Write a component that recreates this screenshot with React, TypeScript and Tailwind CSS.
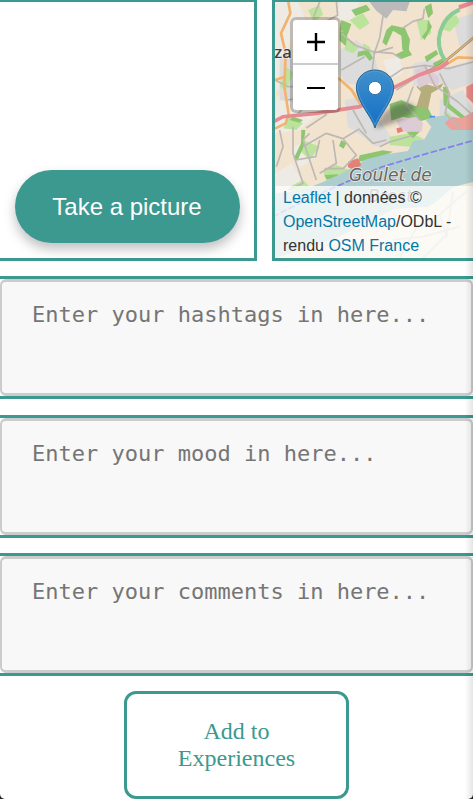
import React from "react";

function MapTiles() {
  return (
    <svg
      viewBox="6 6 594 768"
      preserveAspectRatio="xMinYMin slice"
      className="absolute inset-0 h-full w-full"
      aria-hidden="true"
    >
      <defs>
        <filter id="soft" x="-5%" y="-5%" width="110%" height="110%">
          <feGaussianBlur stdDeviation="2" />
        </filter>
        <filter id="shade" x="-30%" y="-30%" width="160%" height="160%">
          <feGaussianBlur stdDeviation="7" />
        </filter>
        <linearGradient id="pin" x1="0" y1="0" x2="0" y2="1">
          <stop offset="0" stopColor="#4090cc" />
          <stop offset="1" stopColor="#126fc6" />
        </linearGradient>
      </defs>
      <g filter="url(#soft)">
        <rect x="-20" y="-20" width="660" height="820" fill="#f2e3cf" />
        <g fill="#eeeae4">
          <path d="M6 6h70l20 50-50 80 10 100-50 40z" />
          <path d="M200 6h60l-20 50-50 10zM10 290l90-10 40 60-60 50-74 10zM330 180l50-10 10 50-40 20zM60 440l60-20 10 50-60 40z" />
          <path d="M6 520l50-30 30 50-60 50-20-10z" />
        </g>
        <g fill="#dcdcdc">
          <path d="M200 150l50-30 50 40 20 60-40 40-60-10-30-40z" />
          <path d="M420 190l60-10 50 20 70-20v70l-60 20-60-30-60 20z" />
          <path d="M540 60l60-20v80l-40 20z" />
          <path d="M215 300l60-10 40 60 30 50-60 20-60-40z" />
          <path d="M20 170l50 10 30 60-20 70-60-10z" />
          <path d="M500 300l70-30 30 60-40 40-60-20z" />
          <path d="M290 390l50 0 20 30-50 20-30-20z" />
        </g>
        <path d="M290 6h120l-10 28-40-4-20 26-30-24z" fill="#bababa" />
        <g fill="#bce39c">
          <path d="M105 30l35-14 10 28-28 20zM230 60l40-20 20 30-30 20zM220 110l40 30-20 20-25-10z" />
          <path d="M270 130l20 10 10 35-30-10zM510 60l40-15 10 20-30 30-24-8zM430 60l40 0 5 40-30 20z" />
          <path d="M40 200l20 20-20 50-20-10zM50 350l40 20-20 20-40-5z" />
          <path d="M350 410l60-10 40 15-40 25-60-5zM520 330l50 60-30 20-30-40zM90 420l50 20-30 40-25-25z" />
          <path d="M150 510l40-15 40 15-30 25-45-4zM50 560l40-20 20 20-50 25z" />
        </g>
        <g fill="#8dc570">
          <path d="M235 30l45-16 12 16-44 18zM205 60l30 12-10 30-25-12zM200 92l24 8-6 38-18-16z" />
          <path d="M455 20l20-10 5 30-14 15zM465 60l12 20-22 40-8-10 15-20z" />
          <path d="M340 90l16-14 40 8 15 35-5 40-18-10-3-42-25-15-20 45-12-10z" />
          <path d="M365 165l40-20 12 20-32 12zM255 155l30-5 15 25-10 8-15-18-22 6z" />
          <path d="M455 170l35-20 6 12-35 25zM480 190l35-18 8 10-40 22z" />
          <path d="M350 312l35-12 40 18 35-4 20 40-40 10-50-14-35 12z" />
          <path d="M510 260l15 2 5 50 55 45-8 8-65-50zM60 350l30 10-10 8-30-8z" />
          <path d="M85 390l12 0-5 50-18 40-12-4 22-46zM205 420l15 10-8 16-14-8zM155 525l40-2 5 8-40 8z" />
          <path d="M260 466l70-15 30 4-45 20-60 10zM400 395l45-5-25 25z" />
        </g>
        <path d="M430 260l20-10 36 10 25-10-6 12-30 18-10 48-35-8 14-45z" fill="#b5ad7c" />
        <path d="M425 210l30-10 42 30 0 28-28-8-32 15zM370 360l60-10 20 20-5 25-60 0z" fill="#ddcbd5" />
        <path d="M458 360l25-10 42-5 25 45h50v195l-55 13-80 22-100 6-180 90-185 60V580l80-6 70-28 60-28 70-40 60-15 65-10 15-30 35-6 20-36z" fill="#aecdce" />
        <path d="M535 350l30 5 35-20v55h-65l-20-20z" fill="#eaa29b" />
        <path d="M580 260l20-10v60l-20-20z" fill="#e98d8a" />
        <path d="M600 546l-60 15-40 35-50 36-60 30-40 40-70 72h320z" fill="#efe9d4" />
        <path d="M225 485l30-10 10 20-20 15-20-8zM370 385l15-3 5 12-16 6z" fill="#e48176" />
        <g fill="none" stroke="#bdb8b2" strokeWidth="5" strokeLinejoin="round">
          <path d="M332 34l-12 80-16 46-10 80 10 50M205 100l40 35 55 20 60 5 24 16M390 84l30-20 30-8 4-30M300 160l60-18M75 130l40 90-10 90-38 40M205 210l70-40M190 6l4 40-40 20M140 6l-18 44" />
          <path d="M340 240l50-34 65-10 30 60 70 50 45 40M370 270l70-44M455 196l70 10 75-20M500 220l30 60-14 60 50 50M420 260l-20 56 40 44" />
          <path d="M20 390l10 50-20 60M60 380l0 80 30 90-44 20M90 440l70-40 50 16 50-30M140 420l-12 50-60 10M210 416l40 50-40 40-55 0M260 390l40 40 40-10M240 330l40 70M110 400l-20 20 40 120M180 420l10 70-50 30" />
          <path d="M320 440l30-14 70-20M40 300l80-10 40 54-60 40M6 240l40 20 80 0" />
        </g>
        <g fill="none" stroke="#ccd0c7" strokeWidth="5">
          <path d="M380 774l50-90 70-40 80-70M500 644l20 60-70 70M360 720l90-10 110-30M540 574l-20 140" />
        </g>
        <g fill="none" stroke="#f3b36e" strokeWidth="8" strokeLinejoin="round">
          <path d="M46 6l6 34-28 60 14 60-4 100 14 90M196 234l40 36 30 50M36 230l-30 10M48 340l-10 30-32 16" />
          <path d="M505 202l50-30 45 2" />
        </g>
        <path d="M440 225l60-28 55-45 50-42" fill="none" stroke="#928c82" strokeWidth="8" />
        <path d="M440 225l60-28 55-45 50-42" fill="none" stroke="#edb66c" strokeWidth="4" />
        <path d="M0 366l30-16 100-10 130-20 80-46 100-50 60-20 26-18" fill="none" stroke="#e68b91" strokeWidth="11" />
        <path d="M516 182q-28-44-14-88 14-46 58-66" fill="none" stroke="#8bcc96" strokeWidth="12" />
        <path d="M558 22l46-16" fill="none" stroke="#e48a90" strokeWidth="13" />
        <path d="M470 350h16" stroke="#538ee8" strokeWidth="5" />
        <path d="M596 423l-150 42-120 36-110 47-110 49-110 55" fill="none" stroke="#807fec" strokeWidth="5" strokeDasharray="20 7" />
      </g>
      <g
        fontFamily="'DejaVu Sans', sans-serif"
        fill="#626666"
        stroke="#e9ebe6"
        strokeWidth="5"
        paintOrder="stroke"
        fontStyle="italic"
        fontSize="51"
        textAnchor="middle"
      >
        <text x="352" y="542">Goulet de</text>
        <text x="352" y="606">Brest</text>
      </g>
      <text x="4" y="174" fontFamily="'Noto Sans', sans-serif" fontSize="50" fontWeight="500" fill="#3c3c3c" stroke="#eee" strokeWidth="4" paintOrder="stroke">
        za
      </text>
      <path d="M306 386q6-34 45-62 32-22 65-12 22 12-10 35-34 22-100 39z" fill="#222" opacity=".35" filter="url(#shade)" />
      <path
        d="M306 384C300 356 250 303 250 264c0-32 25-54 56-54s56 22 56 54c0 39-50 92-56 120z"
        fill="url(#pin)"
        stroke="#2d6894"
        strokeWidth="3"
      />
      <path d="M306 374C298 347 254 300 254 264c0-29 23-50 52-50s52 21 52 50c0 36-44 83-52 110z" fill="none" stroke="#5b9fd2" strokeWidth="3" opacity=".7" />
      <circle cx="306" cy="264" r="20" fill="#fff" stroke="#2e72aa" strokeWidth="3" />
    </svg>
  );
}

function ZoomControl() {
  return (
    <div className="absolute top-[15px] left-[15px] flex w-[51px] flex-col rounded-md border-3 border-black/20 bg-white bg-clip-padding">
      <button type="button" aria-label="Zoom in" className="flex h-[45px] items-center justify-center border-b-2 border-[#ccc]">
        <svg viewBox="0 0 18 18" className="size-[18px]" stroke="#000" strokeWidth="2.4">
          <path d="M0 9h18M9 0v18" />
        </svg>
      </button>
      <button type="button" aria-label="Zoom out" className="flex h-[45px] items-center justify-center">
        <svg viewBox="0 0 18 18" className="size-[18px]" stroke="#000" strokeWidth="2">
          <path d="M0 9h18" />
        </svg>
      </button>
    </div>
  );
}

function LocationMap() {
  return (
    <section aria-label="Map" className="relative overflow-hidden border-t-2 border-b-3 border-l-3 border-[#3b9990]">
      <MapTiles />
      <ZoomControl />
      <p className="absolute inset-x-0 bottom-0 bg-white/75 pl-2 text-base leading-6 text-[#333]">
        <a href="#leaflet" className="text-[#0078a8]">Leaflet</a> | données ©{" "}
        <a href="#openstreetmap" className="text-[#0078a8]">OpenStreetMap</a>/ODbL - rendu{" "}
        <a href="#osm-france" className="text-[#0078a8]">OSM France</a>
      </p>
    </section>
  );
}

function Field({ name }: { name: string }) {
  return (
    <div className="border-y-3 border-[#3b9990]">
      <textarea
        aria-label={name}
        placeholder={`Enter your ${name} in here...`}
        className="block h-[117px] w-full resize-none rounded-md border-x-2 border-y-3 border-[#ccc] bg-[#f8f8f8] px-[30px] py-[19px] font-['DejaVu_Sans_Mono',monospace] text-[22px] leading-7 text-[#333] placeholder:text-[#757575]"
      />
    </div>
  );
}

export default function App() {
  return (
    <div className="bg-[#222]">
      <main className="relative flex min-h-screen flex-col justify-between gap-[15px] overflow-hidden rounded-b-[5px] bg-white font-['Liberation_Sans',Arial,sans-serif]">
        <div className="grid h-[261px] grid-cols-[257fr_201fr] gap-[15px]">
          <section aria-label="Picture" className="flex items-end justify-center border-t-2 border-r-3 border-b-3 border-[#3b9990] pb-[15px]">
            <button type="button" className="h-[73px] w-[225px] rounded-full bg-[#3b9990] text-2xl text-white shadow-[0_6px_12px_rgba(0,0,0,0.25)]">
              Take a picture
            </button>
          </section>
          <LocationMap />
        </div>
        <Field name="hashtags" />
        <Field name="mood" />
        <Field name="comments" />
        <button
          type="button"
          className="h-[108px] w-[225px] self-center rounded-xl border-3 border-[#3b9990] bg-white px-10 font-['Liberation_Serif','Times_New_Roman',serif] text-2xl leading-[27px] text-[#3b9990]"
        >
          Add to Experiences
        </button>
        <div className="pointer-events-none absolute inset-y-0 right-0 w-2 bg-linear-to-r from-transparent to-black/10" />
      </main>
    </div>
  );
}
